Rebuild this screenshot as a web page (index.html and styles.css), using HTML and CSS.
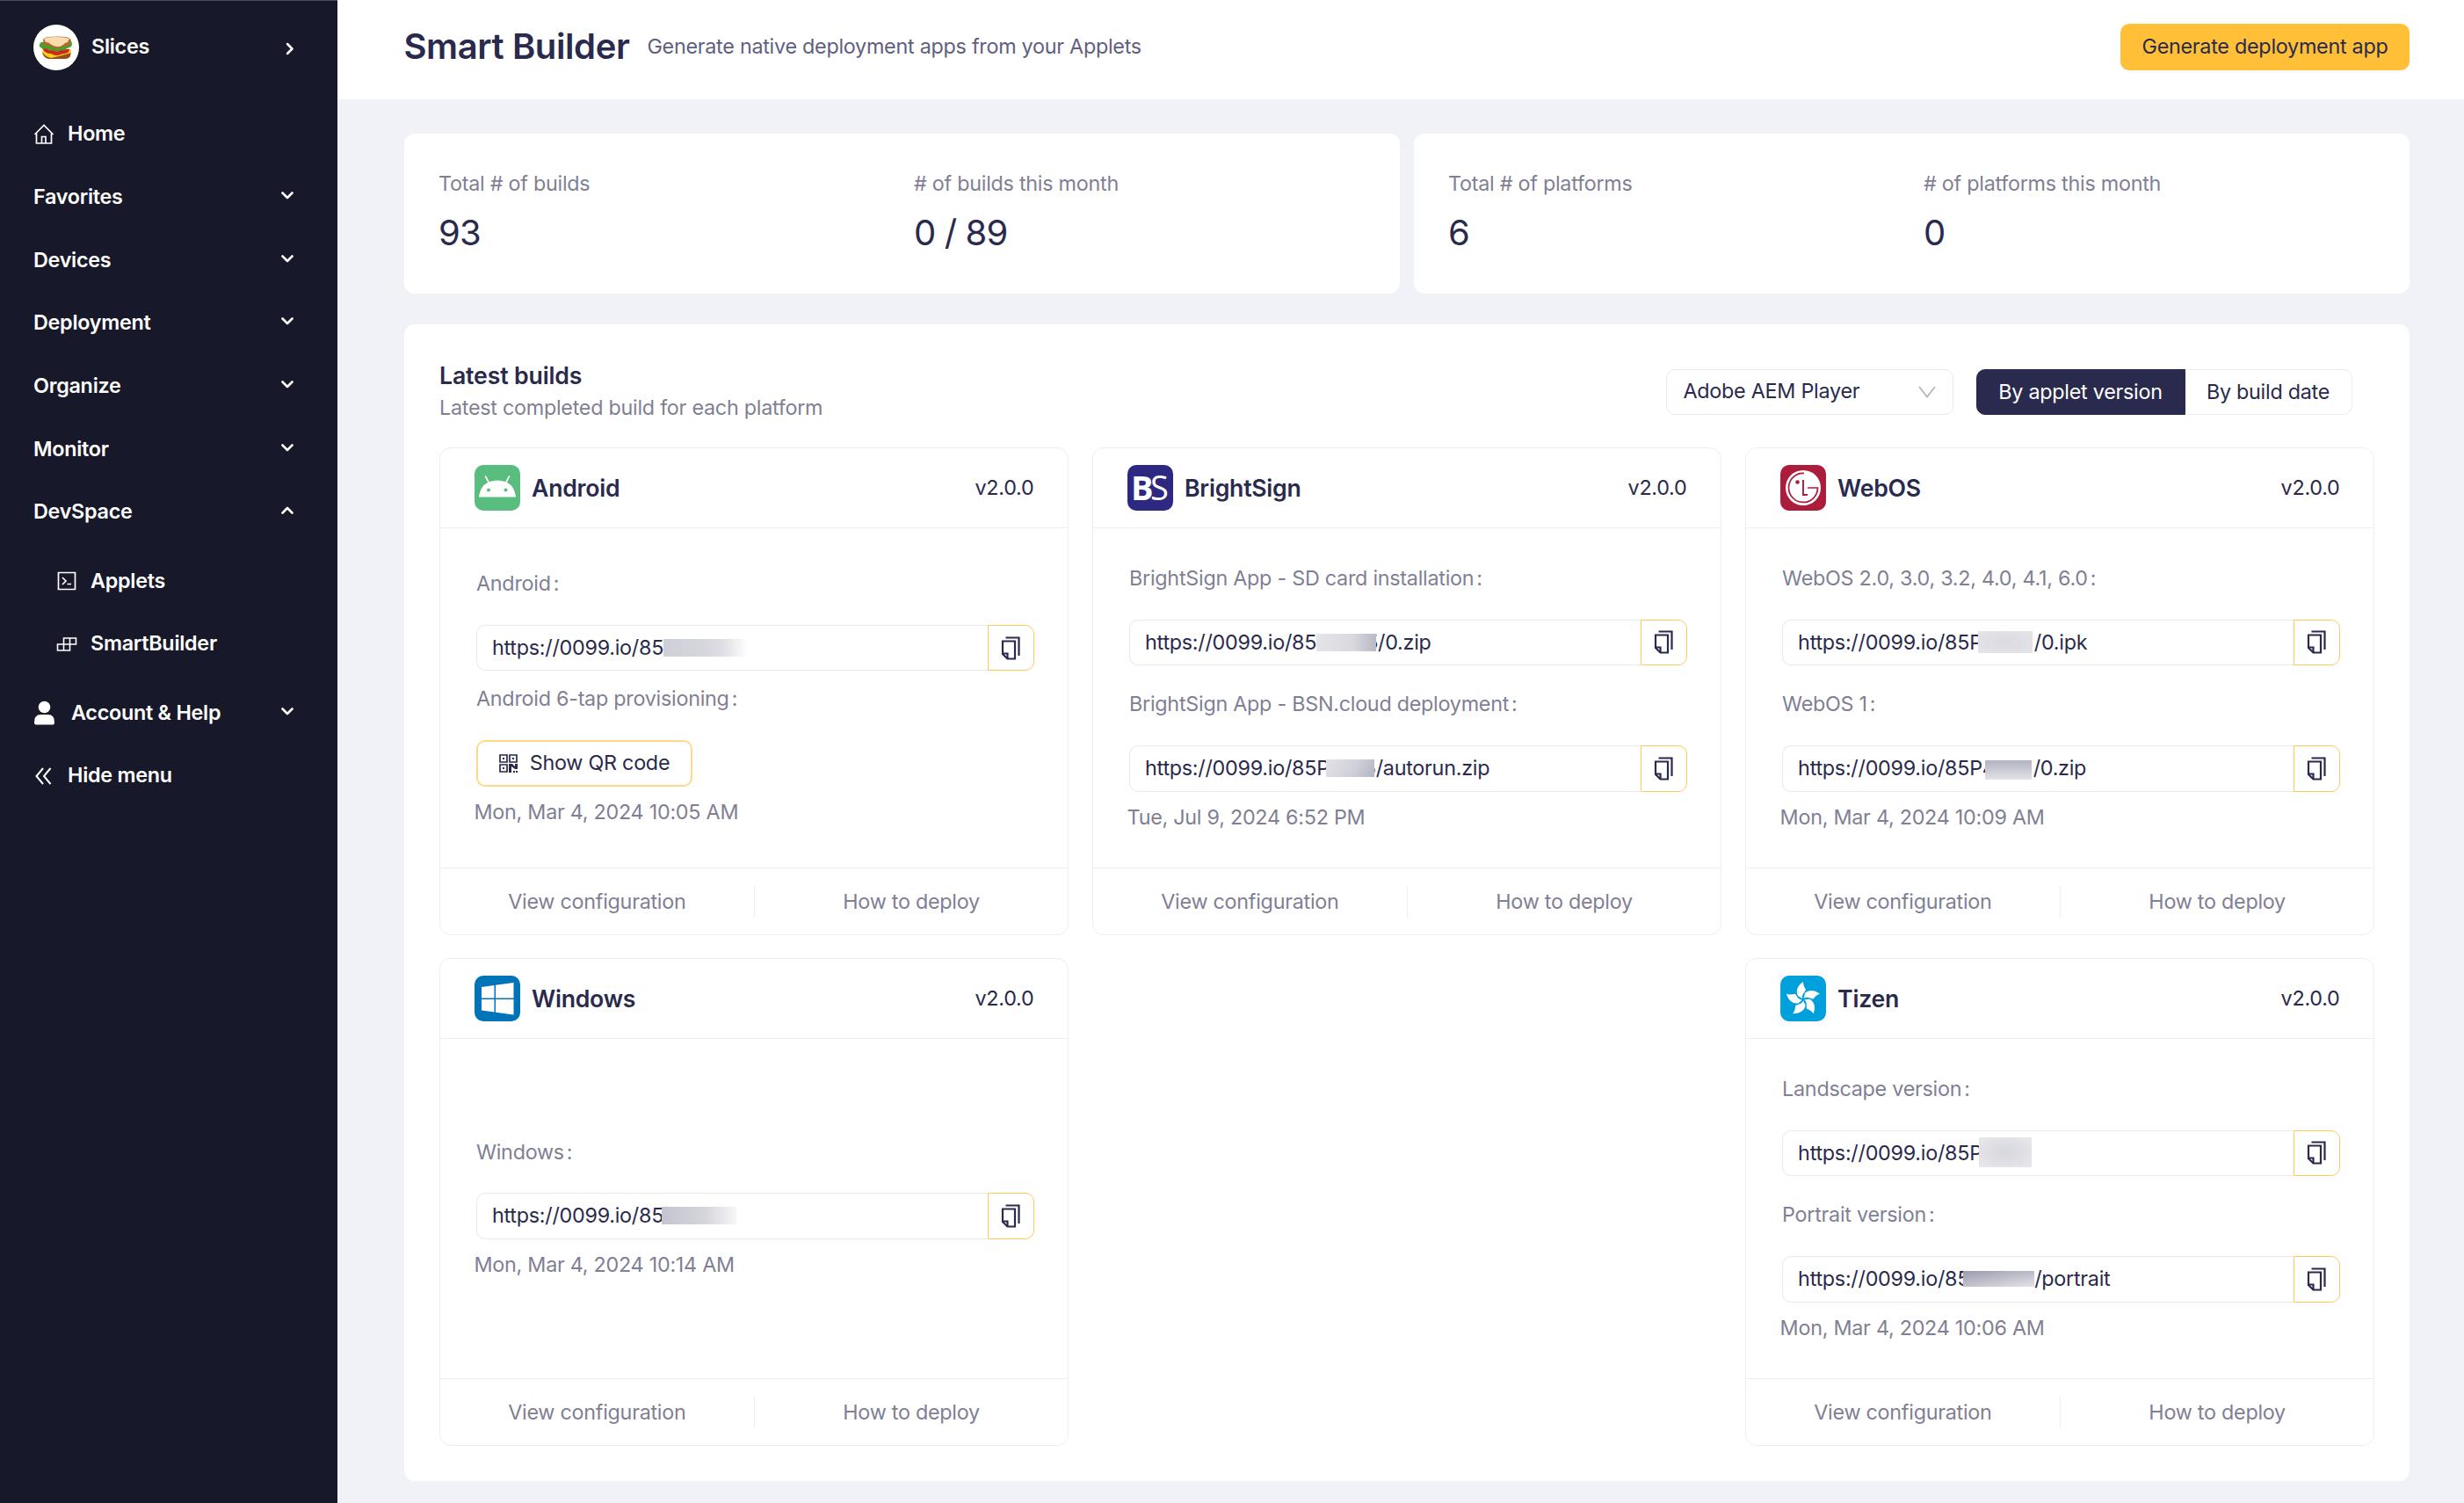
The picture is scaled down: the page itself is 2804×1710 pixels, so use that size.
FILE: index.html
```html
<!DOCTYPE html>
<html lang="en">
<head>
  <meta charset="UTF-8">
  <meta name="viewport" content="width=device-width, initial-scale=1.0">
  <title>Smart Builder</title>
  <link rel="stylesheet" href="styles.css">
</head>
<body>
  <!-- shared icons -->
  <svg class="defs" width="0" height="0">
    <symbol id="chevron" viewBox="0 0 14 9"><path d="M1.500 1.500 7 7l5.500-5.500" fill="none" stroke="currentColor" stroke-width="2.600" stroke-linecap="round" stroke-linejoin="round"/></symbol>
    <symbol id="copy" viewBox="0 0 22 27"><g fill="none" stroke="currentColor" stroke-width="2.200"><path d="M2 5.500H16V25.500H7.500L2 20z"/><path d="M2 19.500H7.500V25.500"/><path d="M5.500 1.500H20.500V22"/></g></symbol>
  </svg>

  <aside class="sidebar">
    <div class="account">
      <span class="avatar">
        <svg viewBox="0 0 52 52" width="52" height="52">
          <path d="M10 32q16-5 33-2l-1 6q-2 3-6 3H17q-5-1-7-7z" fill="#9c4a1e"/>
          <path d="M9 29l10 3 8 3 12-3 4-4 0 4-14 4-9 2q-8-2-11-9z" fill="#f5d312"/>
          <path d="M10 27q8-2 17 4 8-4 15-3-4 5-10 5-5 4-12 0-7 0-10-6z" fill="#d9251c"/>
          <path d="M9 20q-4 3-1 6 4 3 7 1 3 4 8 2 4 4 8 0 5 1 7-2 6-1 6-5 0-3-3-4z" fill="#4a9e2a"/>
          <path d="M11 17q1-2 6-3 10-1 20 0 5 1 6 4l-3 6-7 1q-7 5-14-1l-7-1z" fill="#b9642a"/>
          <path d="M12 16q3-2 14-2t15 2l-2 4q-4 1-5 3-7 5-15-1-1-2-5-2z" fill="#fbdcae"/>
        </svg>
      </span>
      <span>Slices</span>
      <svg class="arrow right"><use href="#chevron"/></svg>
    </div>
    <nav>
      <a class="item">
        <svg class="icon" viewBox="0 0 24 24"><path d="M1.500 12 12 1.500 22.500 12M3.500 10.500V22H20.500V10.500M9.500 22V14.500H14V22" fill="none" stroke="currentColor" stroke-width="1.700"/></svg>
        <span>Home</span>
      </a>
      <a class="item">Favorites <svg class="arrow"><use href="#chevron"/></svg></a>
      <a class="item">Devices <svg class="arrow"><use href="#chevron"/></svg></a>
      <a class="item">Deployment <svg class="arrow"><use href="#chevron"/></svg></a>
      <a class="item">Organize <svg class="arrow"><use href="#chevron"/></svg></a>
      <a class="item">Monitor <svg class="arrow"><use href="#chevron"/></svg></a>
      <a class="item">DevSpace <svg class="arrow up"><use href="#chevron"/></svg></a>
      <div class="submenu">
        <a class="item">
          <svg class="icon" viewBox="0 0 24 24"><path d="M2.500 2.500H21.500V21.500H2.500zM7 8l4 4-4 4M12.500 15.500H17" fill="none" stroke="currentColor" stroke-width="1.700"/></svg>
          <span>Applets</span>
        </a>
        <a class="item">
          <svg class="icon" viewBox="0 0 24 24"><path d="M8.500 5H22.500V12H8.500zM1.500 12H15.500V19H1.500zM8.500 12V19M15.500 5V12" fill="none" stroke="currentColor" stroke-width="1.600"/></svg>
          <span>SmartBuilder</span>
        </a>
      </div>
      <a class="item">
        <svg class="icon user" viewBox="0 0 24 28"><circle cx="12" cy="7.500" r="6.800" fill="currentColor"/><path d="M.5 25.500Q0 16 8 16H16Q24 16 23.500 25.500 23.500 27.500 21.500 27.500H2.500Q.5 27.500.5 25.500z" fill="currentColor"/></svg>
        <span>Account &amp; Help</span>
        <svg class="arrow"><use href="#chevron"/></svg>
      </a>
      <a class="item">
        <svg class="icon" viewBox="0 0 24 24"><path d="M11 3 3.500 12 11 21M19.500 3 12 12 19.500 21" fill="none" stroke="currentColor" stroke-width="2"/></svg>
        <span>Hide menu</span>
      </a>
    </nav>
  </aside>

  <main>
    <header class="topbar">
      <h1>Smart Builder</h1>
      <p>Generate native deployment apps from your Applets</p>
      <button class="primary">Generate deployment app</button>
    </header>

    <div class="content">
      <section class="stats">
        <div class="panel stat-card">
          <div class="stat"><div class="stat-label">Total # of builds</div><div class="stat-value">93</div></div>
          <div class="stat"><div class="stat-label"># of builds this month</div><div class="stat-value">0 / 89</div></div>
        </div>
        <div class="panel stat-card">
          <div class="stat"><div class="stat-label">Total # of platforms</div><div class="stat-value">6</div></div>
          <div class="stat"><div class="stat-label"># of platforms this month</div><div class="stat-value">0</div></div>
        </div>
      </section>

      <section class="panel builds">
        <div class="builds-head">
          <div class="builds-title">
            <h2>Latest builds</h2>
            <p>Latest completed build for each platform</p>
          </div>
          <div class="select">
            <span>Adobe AEM Player</span>
            <svg viewBox="0 0 20 14" width="20" height="14"><path d="M1 1 10 12.500 19 1" fill="none" stroke="#b4b4c0" stroke-width="1.800"/></svg>
          </div>
          <div class="toggle">
            <span class="active">By applet version</span>
            <span>By build date</span>
          </div>
        </div>

        <div class="grid">
          <article class="card">
            <div class="card-head">
              <svg class="logo" viewBox="0 0 52 52">
                <rect width="52" height="52" rx="10" fill="#58bd7f"/>
                <path d="M16 19.500L12.500 13M36 19.500L39.500 13" fill="none" stroke="#fff" stroke-width="1.600" stroke-linecap="round"/>
                <path d="M5 36.500Q7 18 26 17.500 45 18 47 36.500z" fill="#fff"/>
                <circle cx="16" cy="28.500" r="2" fill="#58bd7f"/><circle cx="35.500" cy="28.500" r="2" fill="#58bd7f"/>
              </svg>
              <h3>Android</h3>
              <span>v2.0.0</span>
            </div>
            <div class="card-body">
              <label>Android<i>:</i></label>
              <div class="url"><div class="url-text">https://0099.io/85<b class="mask mask-a"></b></div><button class="copy"><svg><use href="#copy"/></svg></button></div>
              <label class="tight">Android 6-tap provisioning<i>:</i></label>
              <button class="qr">
                <svg viewBox="0 0 21 21" width="21" height="21"><path d="M1 1H9V9H1zM12 1H20V9H12zM1 12H9V20H1z" fill="none" stroke="currentColor" stroke-width="1.700"/><path d="M4 4h2v2H4zM15 4h2v2h-2zM4 15h2v2H4zM11 11h4l3 3v-3h3v6h-3l-4-3v7h-3zM16 19h2v2h-2zM19 19h2v2h-2z" fill="currentColor"/></svg>
                Show QR code
              </button>
              <time>Mon, Mar 4, 2024 10:05 AM</time>
            </div>
            <div class="card-foot"><a>View configuration</a><a>How to deploy</a></div>
          </article>

          <article class="card">
            <div class="card-head">
              <svg class="logo" viewBox="0 0 52 52">
                <rect width="52" height="52" rx="10" fill="#2d2882"/>
                <text x="4" y="39.500" class="bs-b">B</text><text x="26" y="39.500" class="bs-s">S</text>
              </svg>
              <h3>BrightSign</h3>
              <span>v2.0.0</span>
            </div>
            <div class="card-body">
              <label>BrightSign App - SD card installation<i>:</i></label>
              <div class="url"><div class="url-text">https://0099.io/85<b class="mask mask-b"></b>5/0.zip</div><button class="copy"><svg><use href="#copy"/></svg></button></div>
              <label>BrightSign App - BSN.cloud deployment<i>:</i></label>
              <div class="url"><div class="url-text">https://0099.io/85P<b class="mask mask-c"></b>5/autorun.zip</div><button class="copy"><svg><use href="#copy"/></svg></button></div>
              <time>Tue, Jul 9, 2024 6:52 PM</time>
            </div>
            <div class="card-foot"><a>View configuration</a><a>How to deploy</a></div>
          </article>

          <article class="card">
            <div class="card-head">
              <svg class="logo" viewBox="0 0 52 52">
                <rect width="52" height="52" rx="10" fill="#ab1d3a"/>
                <circle cx="26" cy="26" r="20" fill="#fff"/>
                <path d="M27 9.500A16.500 16.500 0 1 0 42.500 26H31" fill="none" stroke="#ab1d3a" stroke-width="1.700"/>
                <path d="M26 17V34H31" fill="none" stroke="#ab1d3a" stroke-width="1.900"/>
                <circle cx="19.500" cy="19.500" r="2.300" fill="#ab1d3a"/>
              </svg>
              <h3>WebOS</h3>
              <span>v2.0.0</span>
            </div>
            <div class="card-body">
              <label>WebOS 2.0, 3.0, 3.2, 4.0, 4.1, 6.0<i>:</i></label>
              <div class="url"><div class="url-text">https://0099.io/85P<b class="mask mask-d"></b>/0.ipk</div><button class="copy"><svg><use href="#copy"/></svg></button></div>
              <label>WebOS 1<i>:</i></label>
              <div class="url"><div class="url-text">https://0099.io/85P4<b class="mask mask-e"></b>/0.zip</div><button class="copy"><svg><use href="#copy"/></svg></button></div>
              <time>Mon, Mar 4, 2024 10:09 AM</time>
            </div>
            <div class="card-foot"><a>View configuration</a><a>How to deploy</a></div>
          </article>

          <article class="card">
            <div class="card-head">
              <svg class="logo" viewBox="0 0 52 52">
                <rect width="52" height="52" rx="10" fill="#0074b8"/>
                <path d="M8 13 22.500 11V25.500H8zM24 10.800 44.500 8V25.500H24zM8 27H22.500V41.500L8 39.500zM24 27H44.500V44.500L24 41.700z" fill="#fff"/>
              </svg>
              <h3>Windows</h3>
              <span>v2.0.0</span>
            </div>
            <div class="card-body">
              <label>Windows<i>:</i></label>
              <div class="url"><div class="url-text">https://0099.io/85<b class="mask mask-f"></b></div><button class="copy"><svg><use href="#copy"/></svg></button></div>
              <time>Mon, Mar 4, 2024 10:14 AM</time>
            </div>
            <div class="card-foot"><a>View configuration</a><a>How to deploy</a></div>
          </article>

          <article class="card last-col">
            <div class="card-head">
              <svg class="logo" viewBox="0 0 52 52">
                <defs><path id="blade" d="M0-20C-6-16-9-10-6-4L-1-1C-2-6 2-8 3-11 1-14 0-17 0-20z"/></defs>
                <rect width="52" height="52" rx="10" fill="#00a0dc"/>
                <g transform="translate(26 27)" fill="#fff">
                  <use href="#blade"/>
                  <use href="#blade" transform="rotate(72)"/>
                  <use href="#blade" transform="rotate(144)"/>
                  <use href="#blade" transform="rotate(216)"/>
                  <use href="#blade" transform="rotate(288)"/>
                </g>
              </svg>
              <h3>Tizen</h3>
              <span>v2.0.0</span>
            </div>
            <div class="card-body">
              <label>Landscape version<i>:</i></label>
              <div class="url"><div class="url-text">https://0099.io/85P<b class="mask mask-g"></b></div><button class="copy"><svg><use href="#copy"/></svg></button></div>
              <label>Portrait version<i>:</i></label>
              <div class="url"><div class="url-text">https://0099.io/85<b class="mask mask-h"></b>/portrait</div><button class="copy"><svg><use href="#copy"/></svg></button></div>
              <time>Mon, Mar 4, 2024 10:06 AM</time>
            </div>
            <div class="card-foot"><a>View configuration</a><a>How to deploy</a></div>
          </article>
        </div>
      </section>
    </div>
  </main>
</body>
</html>
```
FILE: styles.css
```css
* {
  margin: 0;
  padding: 0;
  box-sizing: border-box;
}

body {
  display: flex;
  height: 1710px;
  overflow: hidden;
  background: #f0f2f7;
  color: #292a4d;
  font-family: 'Inter', sans-serif;
  font-size: 23.33px;
  line-height: 36.67px;
  letter-spacing: -0.26px;
}

button {
  font: inherit;
  letter-spacing: inherit;
  color: inherit;
}

.defs {
  position: absolute;
}

/* sidebar */
.sidebar {
  width: 384px;
  flex: none;
  background: #171829;
  border-top: 1px solid #4b4c59;
  color: #fff;
  font-weight: 600;
  padding: 27px 54px 0 38px;
}

.account {
  display: flex;
  align-items: center;
  height: 51px;
}

.avatar {
  width: 52px;
  height: 52px;
  margin-right: 14px;
  border-radius: 50%;
  background: #fff;
}

.avatar svg {
  display: block;
}

nav {
  margin-top: 38px;
}

.item {
  display: flex;
  align-items: center;
  height: 71.67px;
}

.icon {
  width: 24px;
  height: 24px;
  margin-right: 15px;
}

.icon.user {
  width: 25px;
  height: 28px;
  margin-right: 18px;
}

.arrow {
  width: 14px;
  height: 9px;
  margin: -4px -4px 0 auto;
}

.account .arrow {
  margin: 3px -7px 0 auto;
}

.arrow.right {
  transform: rotate(-90deg);
}

.arrow.up {
  transform: rotate(180deg);
}

.submenu {
  padding: 6.67px 0 6.67px 26px;
}

/* top bar */
main {
  flex: 1;
}

.topbar {
  display: flex;
  align-items: center;
  height: 113px;
  padding: 0 62px 7px 75.500px;
  background: #fff;
}

h1 {
  font-size: 40px;
  font-weight: 600;
  letter-spacing: -0.4px;
}

.topbar p {
  margin-left: 20px;
  color: #5f6080;
}

.primary {
  margin-left: auto;
  width: 329px;
  height: 53px;
  border: none;
  border-radius: 10px;
  background: #ffc038;
  box-shadow: 0 3px 0 rgba(0, 0, 0, 0.02);
}

/* panels */
.content {
  padding: 39px 62px 0 76px;
}

.panel {
  background: #fff;
  border-radius: 12px;
}

.stats {
  display: grid;
  grid-template-columns: 1fr 1fr;
  gap: 16px;
}

.stat-card {
  display: grid;
  grid-template-columns: 1fr 1fr;
  gap: 28px;
  height: 182px;
  padding: 39px 40px 39px 39px;
}

.stat-label {
  color: #7f7f95;
}

.stat-value {
  margin-top: 9px;
  font-size: 40px;
  line-height: 56px;
  letter-spacing: -0.9px;
}

.builds {
  margin-top: 35px;
  height: 1316px;
  padding: 40px 39.500px 0 40px;
}

.builds-head {
  display: flex;
  align-items: center;
  padding-right: 26px;
}

h2 {
  font-size: 26.67px;
  font-weight: 600;
}

.builds-title h2 {
  letter-spacing: -0.15px;
}

.builds-title p {
  color: #7f7f95;
}

.select {
  display: flex;
  align-items: center;
  justify-content: space-between;
  width: 327px;
  height: 52px;
  margin-left: auto;
  padding: 0 19px;
  border: 1px solid #e8e8ef;
  border-radius: 10px;
}

.toggle {
  display: flex;
  height: 52px;
  margin-left: 26px;
  line-height: 50px;
}

.toggle span {
  width: 190px;
  text-align: center;
  border: 1px solid #ebebf1;
  border-left: none;
  border-radius: 0 10px 10px 0;
}

.toggle .active {
  width: 238px;
  background: #292a4d;
  border: 1px solid #292a4d;
  border-radius: 10px 0 0 10px;
  color: #fff;
}

/* build cards */
.grid {
  display: grid;
  grid-template-columns: repeat(3, 1fr);
  gap: 26px 26.67px;
  margin-top: 27px;
}

.last-col {
  grid-column: 3;
}

.card {
  display: flex;
  flex-direction: column;
  height: 555px;
  border: 1px solid #ededf2;
  border-radius: 13px;
}

.card-head {
  display: flex;
  align-items: center;
  height: 91px;
  padding: 0 39px;
  border-bottom: 1px solid #ededf2;
}

.logo {
  width: 52px;
  height: 52px;
}

.bs-b,
.bs-s {
  font-family: 'Open Sans', sans-serif;
  font-size: 38px;
  font-weight: 700;
  fill: #fff;
}

.bs-s {
  font-weight: 400;
}

h3 {
  margin-left: 13px;
  font-size: 26.67px;
  font-weight: 600;
}

.card-head span {
  margin-left: auto;
}

.card-body {
  flex: 1;
  display: flex;
  flex-direction: column;
  justify-content: center;
  padding: 0 38.500px 0 41px;
}

label {
  color: #7f7f95;
  margin-bottom: 28px;
}

label i {
  font-style: normal;
  margin-left: 3px;
}

.url {
  display: flex;
  height: 52.67px;
}

.url + label {
  margin-top: 26px;
}

.url + label.tight {
  margin-top: 13.500px;
}

.url-text {
  flex: 1;
  padding-left: 17px;
  line-height: 50px;
  white-space: nowrap;
  border: 1px solid #e8e8ef;
  border-right: none;
  border-radius: 10px 0 0 10px;
}

.copy {
  display: flex;
  align-items: center;
  justify-content: center;
  width: 53px;
  background: #fff;
  border: 1.500px solid #ffc859;
  border-radius: 0 10px 10px 0;
}

.copy svg {
  width: 22px;
  height: 27px;
}

.qr {
  display: flex;
  align-items: center;
  justify-content: center;
  gap: 14px;
  width: 246px;
  height: 53px;
  background: #fff;
  border: 2px solid #ffd988;
  border-radius: 10px;
}

time {
  margin: 11.500px 0 0 -2.500px;
  color: #7f7f95;
}

/* hidden part of the build url */
.mask {
  display: inline-block;
  position: relative;
  height: 20px;
  vertical-align: -2px;
  background: #dcdce3;
}

.mask-a {
  width: 96px;
  background: linear-gradient(90deg, #cfcfd8, #d6d6dd 50%, #dedee4 70%, #fff);
}

.mask-b {
  width: 68px;
  margin-right: -12px;
  background: linear-gradient(90deg, #e4e4e9, #d9d9e0 60%, #b9b9c6);
}

.mask-c {
  width: 55px;
  margin: 0 -12px 0 -4px;
  background: linear-gradient(120deg, #e2e2e7, #cfcfd7 60%, #b4b4c3);
}

.mask-d {
  width: 62px;
  height: 25px;
  margin: 0 2px 0 -5px;
  vertical-align: -4px;
  background: radial-gradient(#dadae1, #e4e4e9);
}

.mask-e {
  width: 53px;
  height: 22px;
  margin: 0 2px 0 -12px;
  vertical-align: -5px;
  background: linear-gradient(#b2b2c3, #e2e2e8);
}

.mask-f {
  width: 85px;
  margin-left: -2px;
  background: linear-gradient(90deg, #c4c4cf, #d6d6dd 60%, #f6f6f8);
}

.mask-g {
  width: 60px;
  height: 34px;
  margin-left: -4px;
  vertical-align: -8px;
  background: radial-gradient(#d6d6de, #e8e8ec);
}

.mask-h {
  width: 81px;
  height: 18px;
  margin-left: -7px;
  vertical-align: -1px;
  background: linear-gradient(170deg, #9a9aae, #c6c6d1 60%, #e2e2e8);
}

.card-foot {
  display: flex;
  align-items: center;
  height: 76px;
  border-top: 1px solid #ededf2;
  color: #7f7f95;
}

.card-foot a {
  flex: 1;
  text-align: center;
}

.card-foot a + a {
  border-left: 1px solid #ededf2;
}
```
